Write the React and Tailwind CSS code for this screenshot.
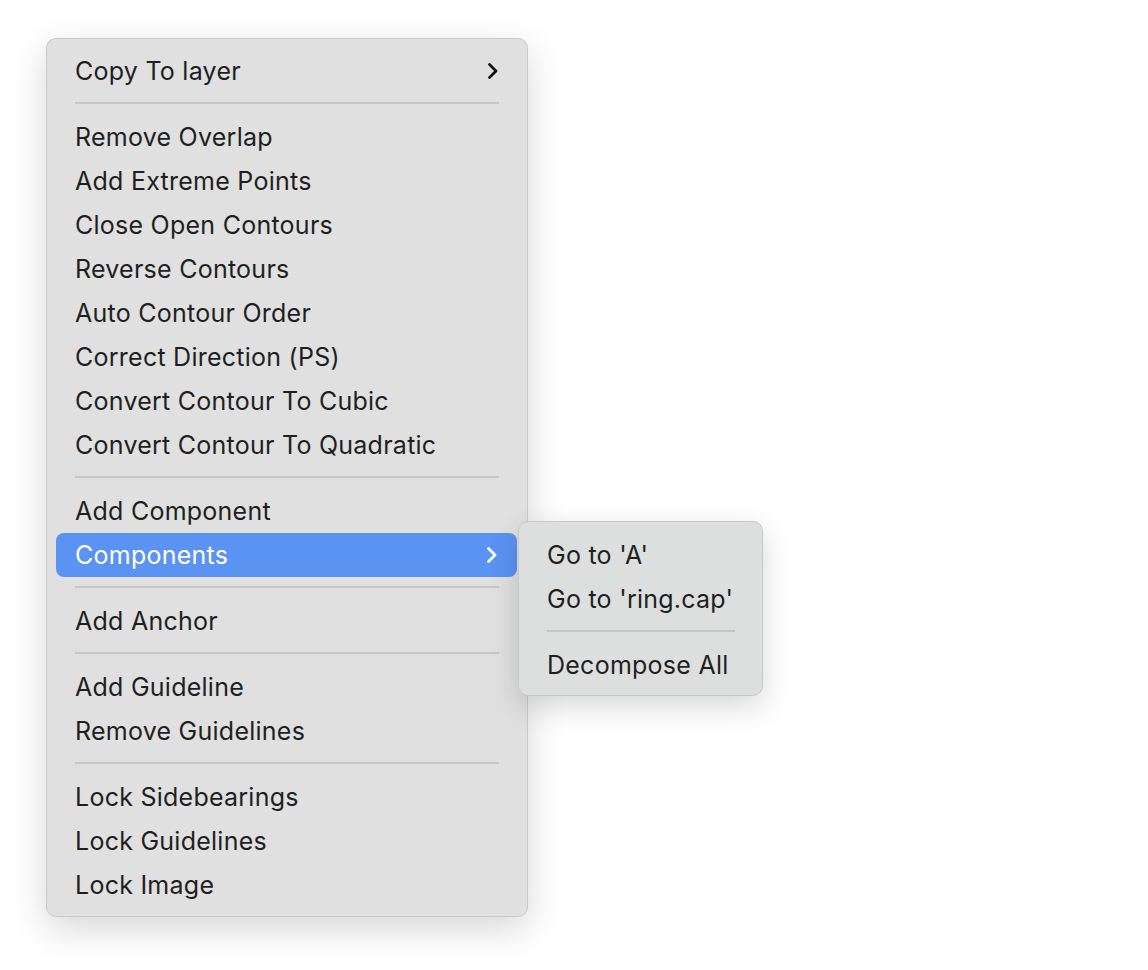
import React from "react";

const Chevron = ({ className }) => (
  <svg width="12" height="18" viewBox="0 0 12 18" className={className} fill="none">
    <path d="M2.5 2.5 L9 9 L2.5 15.5" stroke="currentColor" strokeWidth="2.8" strokeLinecap="round" strokeLinejoin="round" />
  </svg>
);

const Item = ({ children, arrow }) => (
  <div className="mx-[9px] h-[44px] flex items-center justify-between pl-[19px] pr-[19px] rounded-[8px]">
    <span>{children}</span>
    {arrow && <Chevron className="text-[#111]" />}
  </div>
);

const Sep = ({ w = "mx-[28px]" }) => (
  <div className="h-[22px] pt-[9px]">
    <div className={`${w} h-[2px] bg-[#c5c6c5]`} />
  </div>
);

export default function App() {
  return (
    <div
      className="min-h-[970px] w-full bg-white pt-[38px] pl-[46px] text-[#1f1f1f]"
      style={{ fontFamily: "Inter, 'Noto Sans', sans-serif" }}
    >
      <div className="relative w-[482px] rounded-[10px] border border-[#c8c9c8] bg-[#dfe0df] pt-[10px] pb-[9px] text-[25px] leading-none tracking-[0.25px] shadow-[0_12px_36px_rgba(0,0,0,0.16)]">
        <Item arrow>Copy To layer</Item>
        <Sep />
        <Item>Remove Overlap</Item>
        <Item>Add Extreme Points</Item>
        <Item>Close Open Contours</Item>
        <Item>Reverse Contours</Item>
        <Item>Auto Contour Order</Item>
        <Item>Correct Direction (PS)</Item>
        <Item>Convert Contour To Cubic</Item>
        <Item>Convert Contour To Quadratic</Item>
        <Sep />
        <Item>Add Component</Item>
        <div className="relative">
          <div className="ml-[9px] mr-[10px] h-[44px] flex items-center justify-between pl-[19px] pr-[19px] rounded-[8px] bg-[#5b93f3] text-white">
            <span>Components</span>
            <Chevron className="text-white" />
          </div>
          <div className="absolute left-[471px] top-[-12px] w-[245px] rounded-[10px] border border-[#c8c9c8] bg-[#dddfde] pt-[11px] pb-[8px] shadow-[0_10px_30px_rgba(0,0,0,0.16)]">
            <div className="h-[44px] flex items-center pl-[28px]">Go to 'A'</div>
            <div className="h-[44px] flex items-center pl-[28px]">Go to 'ring.cap'</div>
            <div className="h-[22px] pt-[9px]">
              <div className="ml-[28px] mr-[27px] h-[2px] bg-[#c5c6c5]" />
            </div>
            <div className="h-[44px] flex items-center pl-[28px]">Decompose All</div>
          </div>
        </div>
        <Sep />
        <Item>Add Anchor</Item>
        <Sep />
        <Item>Add Guideline</Item>
        <Item>Remove Guidelines</Item>
        <Sep />
        <Item>Lock Sidebearings</Item>
        <Item>Lock Guidelines</Item>
        <Item>Lock Image</Item>
      </div>
    </div>
  );
}
